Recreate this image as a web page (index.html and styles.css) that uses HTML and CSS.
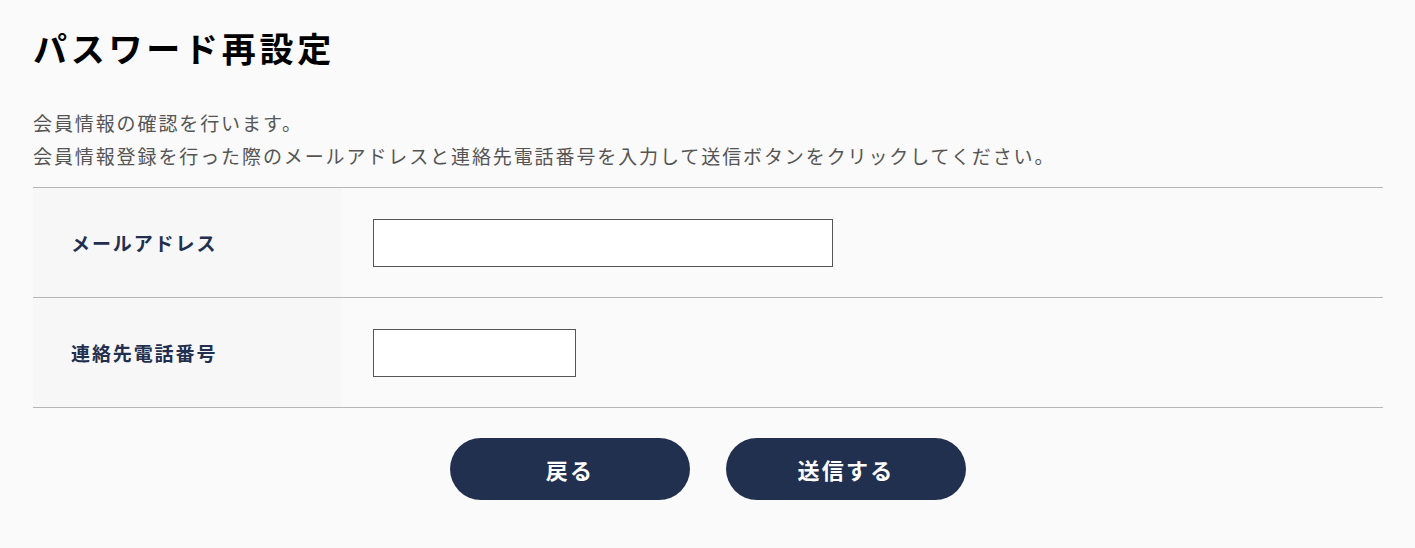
FILE: index.html
```html
<!DOCTYPE html>
<html lang="ja">
<head>
<meta charset="utf-8">
<title>パスワード再設定</title>
<link rel="stylesheet" href="styles.css">
</head>
<body>
<main class="page">
  <h1 class="title">パスワード再設定</h1>
  <div class="lead">
    <p>会員情報の確認を行います。</p>
    <p>会員情報登録を行った際のメールアドレスと連絡先電話番号を入力して送信ボタンをクリックしてください。</p>
  </div>
  <form class="form">
    <div class="row">
      <div class="label">メールアドレス</div>
      <div class="field"><input class="input input-wide" type="text"></div>
    </div>
    <div class="row">
      <div class="label">連絡先電話番号</div>
      <div class="field"><input class="input input-short" type="text"></div>
    </div>
    <div class="actions">
      <button type="button" class="btn">戻る</button>
      <button type="button" class="btn">送信する</button>
    </div>
  </form>
</main>
</body>
</html>
```
FILE: styles.css
```css
* { box-sizing: border-box; }
html, body { margin: 0; padding: 0; background: #fafafa; }
body {
  font-family: "Noto Sans CJK JP", "Noto Sans", sans-serif;
  color: #555;
}
.page { padding: 0 32px 0 33px; }
.title {
  margin: 0;
  padding-top: 24px;
  font-size: 34px;
  line-height: 48px;
  font-weight: 700;
  letter-spacing: 0.11em;
  color: #000;
}
.lead {
  margin-top: 34px;
  padding-bottom: 15px;
  border-bottom: 1px solid #b5b5b5;
}
.lead p {
  margin: 0;
  font-size: 19px;
  line-height: 33px;
  letter-spacing: 0.1em;
  color: #555;
}
.row {
  display: flex;
  height: 110px;
  border-bottom: 1px solid #b5b5b5;
}
.label {
  width: 309px;
  background: #f7f7f7;
  display: flex;
  align-items: center;
  padding-left: 38px;
  font-size: 19px;
  font-weight: 700;
  letter-spacing: 0.1em;
  color: #222f4f;
}
.field {
  flex: 1;
  display: flex;
  align-items: center;
  padding-left: 31px;
}
.input {
  height: 48px;
  border: 1px solid #555;
  background: #fff;
  border-radius: 0;
  margin: 0;
}
.input-wide { width: 460px; }
.input-short { width: 203px; }
.actions {
  display: flex;
  justify-content: center;
  gap: 36px;
  padding-top: 30px;
}
.btn {
  width: 240px;
  height: 62px;
  border: none;
  border-radius: 31px;
  background: #22304f;
  color: #fff;
  font-family: inherit;
  font-size: 22px;
  font-weight: 700;
  letter-spacing: 0.1em;
  cursor: pointer;
}
```
